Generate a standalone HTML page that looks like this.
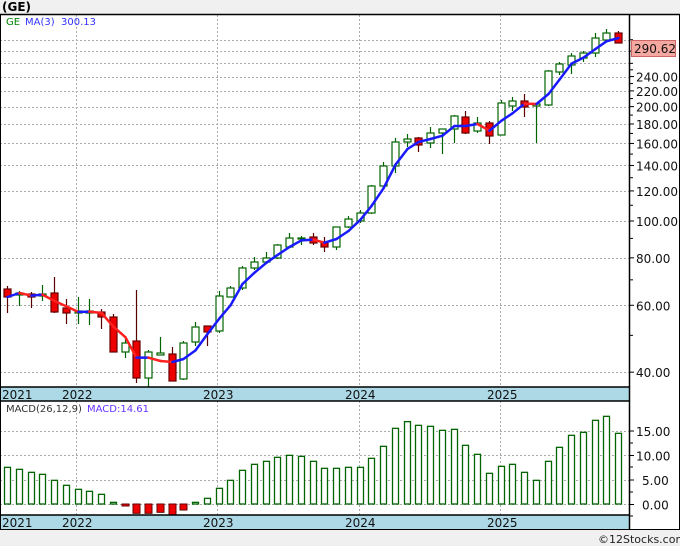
<!DOCTYPE html>
<html><head><meta charset="utf-8"><style>
html,body{margin:0;padding:0;width:680px;height:546px;overflow:hidden;background:#f0f0f0}
svg{display:block}
text{font-family:"DejaVu Sans","Liberation Sans",sans-serif}
</style></head><body>
<svg id="s" width="680" height="546" xmlns="http://www.w3.org/2000/svg">
<rect x="0" y="0" width="680" height="546" fill="#f0f0f0"/>
<rect x="0" y="14" width="680" height="516" fill="#fff"/>
<g id="grid"></g>
<g id="cand"></g>
<g id="ma"></g>
<g id="macd"></g>
<rect x="0" y="387" width="629" height="14" fill="#add8e6"/>
<rect x="0" y="515" width="629" height="15" fill="#add8e6"/>
<line x1="0" y1="387" x2="629" y2="387" stroke="#000" stroke-width="1.5"/>
<line x1="0" y1="401" x2="629" y2="401" stroke="#000" stroke-width="1.5"/>
<line x1="0" y1="515" x2="629" y2="515" stroke="#000" stroke-width="1.5"/>
<line x1="0" y1="529.5" x2="680" y2="529.5" stroke="#000" stroke-width="1"/>
<line x1="0" y1="14.5" x2="680" y2="14.5" stroke="#000" stroke-width="1.5"/>
<line x1="0.5" y1="14" x2="0.5" y2="530" stroke="#000" stroke-width="1"/>
<line x1="629.5" y1="14" x2="629.5" y2="530" stroke="#000" stroke-width="1.5"/>
<line x1="679.5" y1="14" x2="679.5" y2="530" stroke="#000" stroke-width="1"/>
<g font-size="12" fill="#111">
<text x="2" y="399">2021</text><text x="62" y="399">2022</text><text x="203" y="399">2023</text><text x="345" y="399">2024</text><text x="487" y="399">2025</text>
<text x="2" y="527">2021</text><text x="62" y="527">2022</text><text x="203" y="527">2023</text><text x="345" y="527">2024</text><text x="487" y="527">2025</text>
</g>
<text x="2" y="11" font-size="12" font-weight="bold" fill="#000">(GE)</text>
<text x="6" y="25" font-size="10" fill="#008000">GE</text>
<text x="25" y="25" font-size="10" fill="#3333ff">MA(3)&#160;&#160;300.13</text>
<text x="6" y="412" font-size="10" fill="#333">MACD(26,12,9)</text>
<text x="87" y="412" font-size="10" fill="#6633ff">MACD:14.61</text>
<g id="ax" font-size="12" fill="#111"></g>
<rect x="631.5" y="40.5" width="44" height="16" fill="#f4a8a0" stroke="#c66" stroke-width="1"/>
<text x="634" y="53" font-size="12" fill="#111">290.62</text>
<text x="598" y="543" font-size="11" fill="#222">©12Stocks.com</text>
</svg>
<script>
var NS="http://www.w3.org/2000/svg";
function el(p,t,a){var e=document.createElementNS(NS,t);for(var k in a)e.setAttribute(k,a[k]);document.getElementById(p).appendChild(e);return e;}
function yp(p){return 221-165*Math.log(p/100);}
// grid
[40,60,80,100,120,140,160,180,200,220,240,260,280,300].forEach(function(p){var y=Math.round(yp(p))+.5;el("grid","line",{x1:0,x2:629,y1:y,y2:y,stroke:"#aaa","stroke-dasharray":"2,2"});});
[504.5,480.5,455.5,431.5].forEach(function(y){el("grid","line",{x1:0,x2:629,y1:y,y2:y,stroke:"#aaa","stroke-dasharray":"2,2"});});
[76,217,359,500].forEach(function(x){el("grid","line",{x1:x+.5,x2:x+.5,y1:15,y2:387,stroke:"#aaa","stroke-dasharray":"2,2"});el("grid","line",{x1:x+.5,x2:x+.5,y1:401,y2:515,stroke:"#aaa","stroke-dasharray":"2,2"});});
// axis labels
var labs=[[40,"40.00"],[60,"60.00"],[80,"80.00"],[100,"100.00"],[120,"120.00"],[140,"140.00"],[160,"160.00"],[180,"180.00"],[200,"200.00"],[220,"220.00"],[240,"240.00"]];
labs.forEach(function(l){var y=yp(l[0]);var t=el("ax","text",{x:636,y:y+5});t.textContent=l[1];el("ax","line",{x1:629,x2:634,y1:y,y2:y,stroke:"#000"});});
[50,70,90,110,130,150,170,190,210,230,250,260,280,300].forEach(function(p){var y=yp(p);el("ax","line",{x1:629,x2:633,y1:y,y2:y,stroke:"#000"});});
[["15.00",431],["10.00",455.5],["5.00",480],["0.00",504.5]].forEach(function(l){var t=el("ax","text",{x:l[0].length>4?636:642,y:l[1]+5});t.textContent=l[0];el("ax","line",{x1:629,x2:634,y1:l[1],y2:l[1],stroke:"#000"});});
[443,467,492,516].forEach(function(y){el("ax","line",{x1:629,x2:633,y1:y,y2:y,stroke:"#000"});});
// candles: [dir, bodyTop, bodyBot, wickTop, wickBot] dir 1 green 0 red
var C=[[0,289,297,286,313],[1,293,295,291,306],[0,294,297,292,308],[1,294,296,285,301],[0,293,312,277,313],[0,308,313,299,324],[1,311,313,297,324],[1,311,313,299,325],[0,312,317,309,329],[0,317,352,314,352],
[1,343,352,338,358],[0,341,378,290,383],[1,352,378,350,387],[1,353,355,337,355],[0,354,381,347,381],[1,343,379,341,380],[1,327,342,322,346],[0,326,332,326,346],[1,296,331,291,333],[1,288,297,286,297],
[1,268,288,266,290],[1,262,268,257,270],[1,258,262,252,263],[1,245,258,244,259],[1,238,247,233,248],[1,238,239,236,245],[0,237,243,233,245],[0,242,247,237,252],[1,227,247,227,250],[1,219,227,216,228],
[1,213,221,210,223],[1,186,213,185,214],[1,166,186,162,187],[1,142,166,138,173],[1,139,142,134,147],[0,138,145,137,152],[1,133,143,127,148],[1,129,133,129,154],[1,116,129,115,143],[0,117,133,111,134],
[1,123,131,117,133],[0,123,136,121,144],[1,103,135,100,135],[1,101,106,97,111],[0,101,107,94,117],[1,104,106,104,143],[1,71,105,70,106],[1,64,72,62,75],[1,56,65,53,74],[1,53,58,51,62],[1,38,53,33,57],[1,33,40,29,41],[0,33,43,31,43]];
var xs=[];
C.forEach(function(c,i){var x=Math.round(7+11.75*i);xs.push(x);var g=c[0]?"#006400":"#5a0000";
el("cand","line",{x1:x+.5,x2:x+.5,y1:c[3],y2:c[4],stroke:g,"stroke-width":1.2});
el("cand","rect",{x:x-3,y:c[1],width:7,height:Math.max(1,c[2]-c[1]),fill:c[0]?"#fff":"#ee0000",stroke:c[0]?"#006400":"#660000","stroke-width":1.2});});
// MA3 of closes in log space
var cl=C.map(function(c){return c[0]?c[1]:c[2];});
var ma=cl.map(function(v,i){if(i<2)return v;return (cl[i]+cl[i-1]+cl[i-2])/3;});
for(var i=1;i<ma.length;i++){el("ma","line",{x1:xs[i-1]+.5,y1:ma[i-1],x2:xs[i]+.5,y2:ma[i],stroke:ma[i]<=ma[i-1]?"#1a1aff":"#ff2020","stroke-width":2.5,"stroke-linecap":"round"});}
// MACD
var M=[592,598,607,613,631,646,658,664,673,697,708,730,730,727,735,720,697,685,655,631,601,583,574,562,556,559,574,595,595,592,592,565,529,475,455,466,469,481,478,526,553,610,589,583,607,631,574,532,496,487,451,439,490];
M.forEach(function(v,i){var y=270+v/3,x=xs[i]-3;var b=504;
if(y<b)el("macd","rect",{x:x+.5,y:y,width:6,height:b-y,fill:"#fff",stroke:"#006400","stroke-width":1.3});
else el("macd","rect",{x:x,y:b,width:7,height:Math.max(2,y-b),fill:"#ee0000",stroke:"#660000","stroke-width":1});});
</script>
</body></html>
